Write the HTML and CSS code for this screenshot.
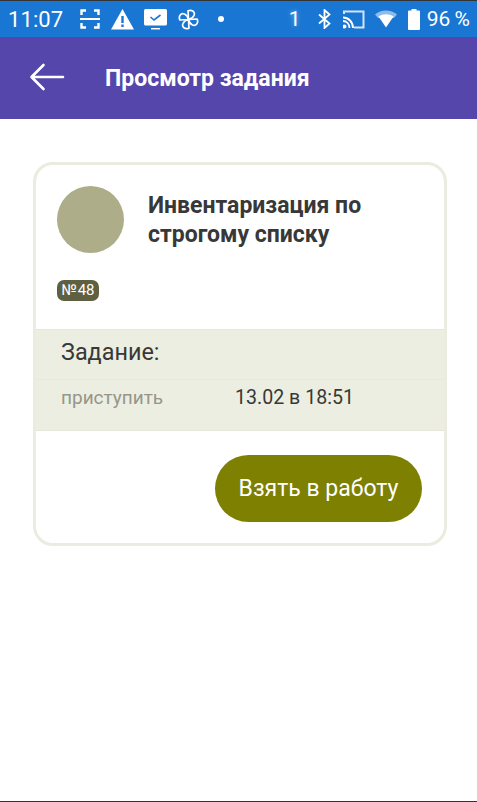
FILE: index.html
```html
<!DOCTYPE html>
<html lang="ru">
<head>
    <meta charset="UTF-8">
    <meta name="viewport" content="width=device-width, initial-scale=1.0">
    <title>Просмотр задания</title>
    <link rel="stylesheet" href="styles.css">
</head>
<body>
    <div class="screen">
        <div class="status-bar">
            <div class="status-left">
                <span class="clock">11:07</span>
                <svg class="ic-scan" width="20" height="20" viewBox="0 0 20 20" fill="none" stroke="#fff" stroke-width="2.4">
                    <path d="M1.500 6V1.500H6M14 1.500h4.500V6M1.500 14v4.500H6M14 18.500h4.500V14"/>
                    <path d="M0 10h20" stroke-width="2"/>
                </svg>
                <svg class="ic-warn" width="23" height="21" viewBox="0 0 23 21">
                    <path fill="#fff" fill-rule="evenodd" d="M11.500 0 23 20.500H0ZM10.300 7v7h2.400V7ZM10.300 15.500v2.400h2.400v-2.400Z"/>
                </svg>
                <svg class="ic-monitor" width="23" height="21" viewBox="0 0 23 21">
                    <rect x="0" y="0" width="23" height="16.500" rx="1.500" fill="#fff"/>
                    <path d="M6.500 8l3.500 3 6.500-5" fill="none" stroke="#1976d2" stroke-width="1.600"/>
                    <path d="M7 19.700h9" stroke="#fff" stroke-width="1.500"/>
                </svg>
                <svg class="ic-fan" width="21" height="21" viewBox="0 0 21 21" fill="none" stroke="#fff" stroke-width="1.700" stroke-linejoin="round">
                    <path id="blade" d="M10.500 10.500 10 1.800C14 .3 17.500 3 16 6.500 15 9 12.500 10 10.500 10.500Z"/>
                    <path d="M10.500 10.500 10 1.800C14 .3 17.500 3 16 6.500 15 9 12.500 10 10.500 10.500Z" transform="rotate(90 10.500 10.500)"/>
                    <path d="M10.500 10.500 10 1.800C14 .3 17.500 3 16 6.500 15 9 12.500 10 10.500 10.500Z" transform="rotate(180 10.500 10.500)"/>
                    <path d="M10.500 10.500 10 1.800C14 .3 17.500 3 16 6.500 15 9 12.500 10 10.500 10.500Z" transform="rotate(270 10.500 10.500)"/>
                </svg>
                <span class="dot"></span>
            </div>
            <div class="status-right">
                <span class="sim">1</span>
                <svg class="ic-bt" width="13" height="20" viewBox="0 0 13 20" fill="none" stroke="#fff" stroke-width="1.800">
                    <path d="M1 5.500 11.500 14.500 6.500 19V1l5 4.500L1 14.500"/>
                </svg>
                <svg class="ic-cast" width="22" height="19" viewBox="0 0 22 19" fill="none" stroke="#fff">
                    <path d="M1 4V1.500h19.500v16H11" stroke="#d3e4f6" stroke-width="2"/>
                    <path d="M0 7.500c5.500 0 10 4.500 10 10.500M0 11c3.800 0 6.500 3 6.500 7" stroke-width="1.800"/>
                    <circle cx="1.500" cy="16.500" r="2" fill="#fff" stroke="none"/>
                </svg>
                <svg class="ic-wifi" width="22" height="18" viewBox="0 0 22 18">
                    <path fill="#8fbbea" d="M0 4.500C6 -1 16 -1 22 4.500L19 8H3Z"/>
                    <path fill="#fff" d="M3.500 6.500C8 3.500 14 3.500 18.500 6.500L11 17.500Z"/>
                </svg>
                <svg class="ic-batt" width="12" height="21" viewBox="0 0 12 21">
                    <path fill="#fff" d="M3.500 0h5v1.500H11a1 1 0 0 1 1 1V20a1 1 0 0 1-1 1H1a1 1 0 0 1-1-1V2.500a1 1 0 0 1 1-1h2.500Z"/>
                </svg>
                <span class="batt-text">96 %</span>
            </div>
        </div>

        <header class="app-bar">
            <svg class="back" width="36" height="30" viewBox="0 0 36 30" fill="none" stroke="#fff" stroke-width="2.600" stroke-linecap="round" stroke-linejoin="round">
                <path d="M34 15H3M14.500 3 2.500 15l12 12"/>
            </svg>
            <h1 class="app-title">Просмотр задания</h1>
        </header>

        <main class="content">
            <section class="card">
                <div class="card-head">
                    <div class="avatar"></div>
                    <h2 class="card-title">Инвентаризация по строгому списку</h2>
                </div>
                <div class="badge-row"><span class="badge">№ 48</span></div>

                <div class="task-info">
                    <div class="task-label">Задание:</div>
                    <div class="task-row">
                        <span class="task-key">приступить</span>
                        <span class="task-value">13.02 в 18:51</span>
                    </div>
                </div>

                <div class="card-actions">
                    <button class="take-btn" type="button">Взять в работу</button>
                </div>
            </section>
        </main>
    </div>
</body>
</html>
```

FILE: styles.css
```css
* {
    box-sizing: border-box;
}

html, body {
    margin: 0;
    height: 100%;
}

body {
    background: #fff;
    font-family: Roboto, 'Noto Sans', sans-serif;
    overflow: hidden;
}

.screen {
    height: 802px;
    display: flex;
    flex-direction: column;
    border-top: 1px solid #333;
    border-bottom: 1px solid #333;
}

/* статус-бар */
.status-bar {
    height: 36px;
    flex: none;
    background: #1976d2;
    color: #fff;
    display: flex;
    justify-content: space-between;
    align-items: center;
    padding: 0 7px 0 8px;
    font-size: 22px;
}

.status-left,
.status-right {
    display: flex;
    align-items: center;
}

.clock {
    width: 54px;
    letter-spacing: 0.1px;
}

.ic-scan { margin-left: 18px; }
.ic-warn { margin-left: 11px; }
.ic-monitor { margin-left: 10px; }
.ic-fan { margin-left: 11px; }

.dot {
    width: 6px;
    height: 6px;
    margin-left: 19px;
    border-radius: 50%;
    background: #fff;
}

.sim {
    width: 11px;
    font-size: 21px;
    line-height: 24px;
    text-shadow: 0 0 5px rgba(255,255,255,0.5);
}

.ic-bt { margin-left: 18px; }
.ic-cast { margin-left: 12px; }
.ic-wifi { margin-left: 10px; }
.ic-batt { margin-left: 11px; }

.batt-text {
    margin-left: 7px;
    font-size: 21px;
    word-spacing: -1px;
}

/* шапка */
.app-bar {
    height: 82px;
    flex: none;
    background: #5546ab;
    display: flex;
    align-items: center;
    padding-left: 29px;
}

.back {
    flex: none;
    margin-bottom: 2px;
}

.app-title {
    margin: 0 0 0 40px;
    color: #fff;
    font-size: 23px;
    font-weight: 700;
}

/* карточка */
.content {
    flex: 1;
    padding: 43px 30px 0 33px;
}

.card {
    height: 384px;
    border: 3px solid #ebebdf;
    border-radius: 20px;
    background: #fff;
    display: flex;
    flex-direction: column;
}

.card-head {
    display: flex;
    align-items: center;
    padding: 21px 21px 0;
    gap: 24px;
}

.avatar {
    width: 67px;
    height: 67px;
    flex: none;
    border-radius: 50%;
    background: #adad8a;
}

.card-title {
    margin: 0;
    color: #383838;
    font-size: 23px;
    font-weight: 700;
    line-height: 29px;
}

.badge-row {
    display: flex;
    padding: 27px 21px 0;
}

.badge {
    height: 21px;
    width: 42px;
    border-radius: 7px;
    background: #5f5f42;
    color: #fff;
    font-size: 15px;
    line-height: 21px;
    text-align: center;
    word-spacing: -3px;
}

.task-info {
    margin-top: 28px;
    height: 102px;
    background: #ebeee0;
    border-top: 1px solid #e6e6da;
    border-bottom: 1px solid #e6e6da;
    color: #383838;
}

.task-label {
    height: 50px;
    padding: 8px 0 0 25px;
    font-size: 23.4px;
    line-height: 28px;
    border-bottom: 1px solid #e8e9dc;
}

.task-row {
    display: flex;
    align-items: center;
    height: 35px;
    padding-left: 25px;
    font-size: 19.6px;
}

.task-key {
    width: 174px;
    color: #96968a;
    font-size: 19px;
}

.card-actions {
    flex: 1;
    display: flex;
    justify-content: flex-end;
    align-items: flex-start;
    padding: 24px 22px 0 0;
}

.take-btn {
    width: 207px;
    height: 67px;
    border: 0;
    border-radius: 34px;
    background: #7d8000;
    color: #fff;
    font-family: inherit;
    font-size: 23px;
}
```
